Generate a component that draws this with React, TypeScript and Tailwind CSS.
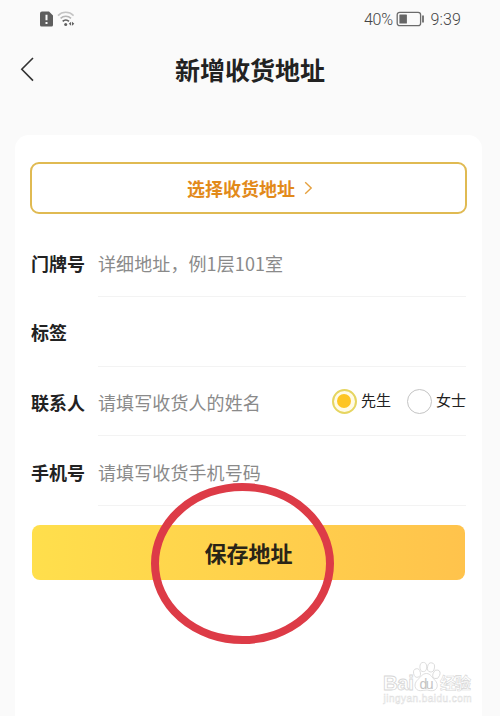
import type { ReactNode } from "react";

interface FieldRowProps {
  label: string;
  placeholder?: string;
  children?: ReactNode;
}

function FieldRow({ label, placeholder, children }: FieldRowProps) {
  return (
    <div className="flex h-[69.75px]">
      <span className="w-[67px] shrink-0 pt-[20.5px] text-[18px] leading-[30px] font-bold text-[#222]">
        {label}
      </span>
      <div className="flex flex-1 justify-between border-b border-[#f3f3f3] pt-[20.5px]">
        <span className="text-[18px] leading-[30px] tracking-[0.1px] text-[#8a8a8a]">{placeholder}</span>
        {children}
      </div>
    </div>
  );
}

interface RadioProps {
  label: string;
  checked?: boolean;
}

function Radio({ label, checked = false }: RadioProps) {
  return (
    <div className="flex items-center gap-[4px]">
      <span
        className={
          checked
            ? "flex size-[25px] items-center justify-center rounded-full border-2 border-[#e6d560] bg-[#fffbe6]"
            : "size-[25px] rounded-full border border-[#c4c4c4]"
        }
      >
        {checked && <span className="size-[14px] rounded-full bg-[#fdc524]" />}
      </span>
      <span className="-mt-[3px] text-[15px] leading-[24px] text-[#222]">{label}</span>
    </div>
  );
}

function StatusBar() {
  return (
    <div className="flex h-[38px] items-center justify-between pr-[39px] pl-[40px]">
      <div className="flex items-center gap-[4px]">
        {/* SIM alert */}
        <svg width="13" height="16" viewBox="0 0 13 16">
          <path d="M2 .5h7L13 4.5V14a1.5 1.5 0 0 1-1.5 1.5h-10A1.5 1.5 0 0 1 0 14V2.5a2 2 0 0 1 2-2z" fill="#5e5e5e" />
          <path d="M6.5 3.8v5.4M6.5 11v2" stroke="#fafafa" strokeWidth="2" />
        </svg>
        <svg width="19" height="16" viewBox="0 0 19 16" fill="none">
          <path d="M1 4.6a11 11 0 0 1 15.6 0" stroke="#c4c4c4" strokeWidth="1.5" />
          <path d="M3.6 7.4a7.3 7.3 0 0 1 10.4 0" stroke="#b5b5b5" strokeWidth="1.5" />
          <path d="M5.7 10.4a4.4 4.4 0 0 1 6.2 0" stroke="#606060" strokeWidth="1.7" />
          <circle cx="8.7" cy="13.4" r="1.5" fill="#606060" />
          <path d="M14.1 10.8l-2.3 2 2.3 2zM15 10.8l2.3 2-2.3 2z" fill="#606060" />
        </svg>
      </div>
      <div className="flex items-center font-['Roboto',sans-serif] text-[16px] leading-[20px] font-light text-[#444]">
        <span className="w-[32px] pt-px tracking-[-0.3px]">40%</span>
        <svg width="29" height="16" viewBox="0 0 29 16">
          <rect x="1.2" y="1.3" width="23.4" height="13.4" rx="2.5" fill="none" stroke="#6b6b6b" strokeWidth="1.3" />
          <rect x="3.4" y="3.5" width="7.5" height="9" rx=".5" fill="#666" />
          <path d="M27 4.5v7" stroke="#6b6b6b" strokeWidth="1.8" />
        </svg>
        <span className="w-[36px] pt-px text-right tracking-[0.1px]">9:39</span>
      </div>
    </div>
  );
}

function Watermark() {
  return (
    <svg
      className="absolute top-[660px] left-[380px]"
      width="96"
      height="46"
      viewBox="0 0 96 46"
      fill="#fff"
      stroke="#d6d6d6"
      strokeWidth=".8"
    >
      <text x="3" y="30" fontFamily="Liberation Sans" fontWeight="bold" fontSize="20.5" textLength="31">Bai</text>
      <ellipse cx="37" cy="13" rx="3.4" ry="4.3" transform="rotate(-12 37 13)" />
      <ellipse cx="43.3" cy="7" rx="3.4" ry="4.6" />
      <ellipse cx="51" cy="7.4" rx="3.5" ry="4.6" transform="rotate(10 51 7.4)" />
      <ellipse cx="56.4" cy="14.3" rx="3.4" ry="4.5" transform="rotate(20 56.4 14.3)" />
      <path d="M46.5 13.5c4 0 5.5 4 8.5 6.8 3.5 3.4 3.2 10-2.8 10.4-2.5.1-4-.7-6-.7s-3.5.8-6 .7c-6-.3-6.5-7-3-10.4 3-2.8 5-6.8 9.3-6.8z" />
      <text x="39.5" y="28.5" fontFamily="Liberation Sans" fontSize="14" textLength="14" fill="#c4c4c4" stroke="none">du</text>
      <text x="60" y="29" fontFamily="Noto Sans CJK SC" fontWeight="bold" fontSize="16" textLength="31" strokeWidth=".6">经验</text>
      <text x="3.5" y="42" fontFamily="Liberation Sans" fontSize="10" textLength="88" stroke="#dedede" strokeWidth=".5">jingyan.baidu.com</text>
    </svg>
  );
}

export default function App() {
  return (
    <div className="relative flex h-[716px] w-[500px] flex-col overflow-hidden bg-[#fafafa] font-['Noto_Sans_CJK_SC',sans-serif]">
      <StatusBar />

      {/* Title bar */}
      <header className="grid h-[64px] grid-cols-[50px_1fr_50px] items-center">
        <svg className="ml-[20px]" width="16" height="26" viewBox="0 0 16 26" fill="none">
          <path d="M13 1L1.8 12.2 13 23.6" stroke="#333" strokeWidth="1.6" />
        </svg>
        <h1 className="pb-[2px] text-center text-[25px] leading-[36px] font-bold text-[#222]">新增收货地址</h1>
      </header>

      <main className="mt-[33px] mr-[18px] ml-[15px] flex-1 rounded-t-[14px] bg-white px-[15px] pt-[27px]">
        <button className="flex h-[52px] w-[437px] items-center justify-center gap-[9px] rounded-[9px] border-2 border-[#e0ba52] pl-[3px] text-[18px] font-bold text-[#e28a1a]">
          选择收货地址
          <svg width="9" height="14" viewBox="0 0 9 14" fill="none">
            <path d="M1.2 1.2L7.2 7l-6 5.8" stroke="#e5a03e" strokeWidth="1.4" />
          </svg>
        </button>

        <div className="mt-[13px] w-[436px] pl-px">
          <FieldRow label="门牌号" placeholder="详细地址，例1层101室" />
          <FieldRow label="标签" />
          <FieldRow label="联系人" placeholder="请填写收货人的姓名">
            <div className="flex h-[28px] gap-[16px]">
              <Radio label="先生" checked />
              <Radio label="女士" />
            </div>
          </FieldRow>
          <FieldRow label="手机号" placeholder="请填写收货手机号码" />
        </div>

        <button className="mt-[19px] ml-[2px] h-[55px] w-[433px] rounded-[8px] bg-linear-to-r from-[#ffdf4c] to-[#ffc34c] text-[22px] font-bold text-[#292417]">
          保存地址
        </button>
      </main>

      {/* Hand-drawn highlight around the save button */}
      <svg className="absolute top-[480px] left-[148px]" width="190" height="168" viewBox="0 0 190 168" fill="none">
        <ellipse cx="94.5" cy="83.5" rx="87.5" ry="76.5" stroke="#dd3b47" strokeWidth="8" />
      </svg>
      <Watermark />
    </div>
  );
}
